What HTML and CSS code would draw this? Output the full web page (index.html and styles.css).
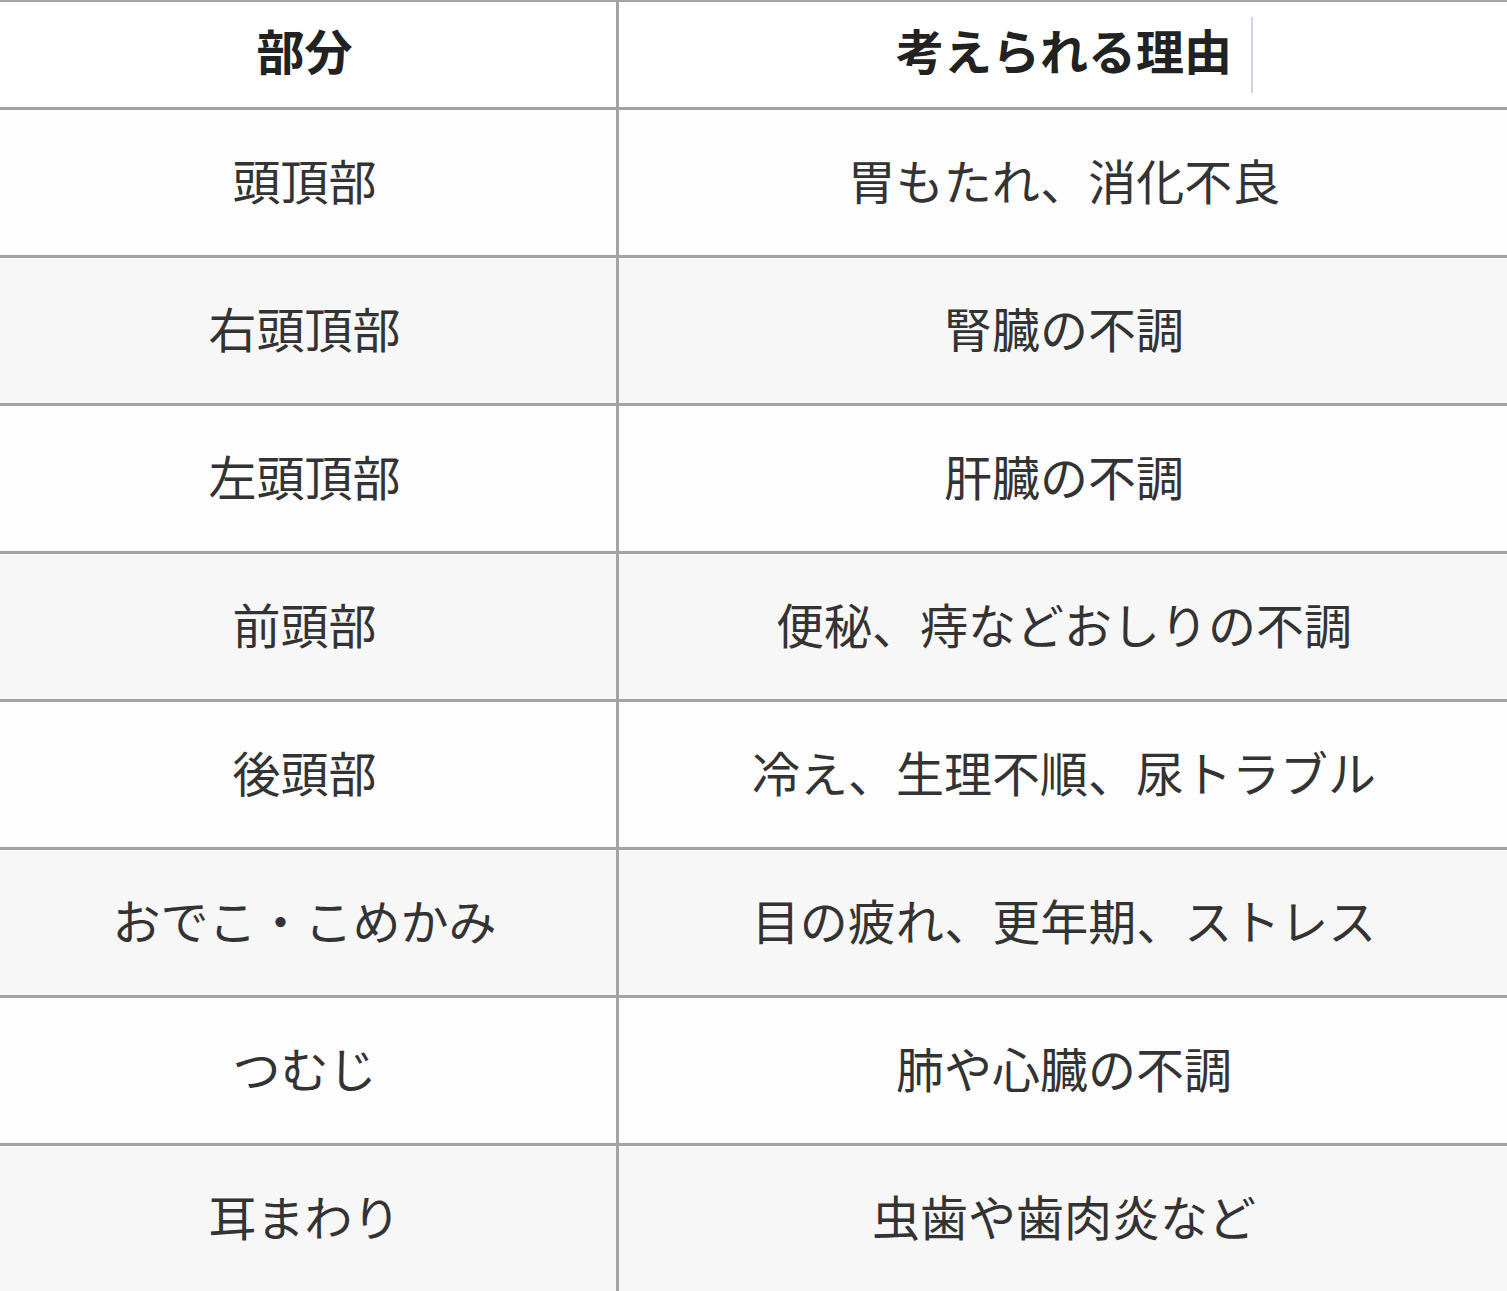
FILE: index.html
```html
<!DOCTYPE html>
<html lang="ja">
<head>
<meta charset="utf-8">
<title>部分と考えられる理由</title>
<link rel="stylesheet" href="styles.css">
</head>
<body>
<table class="reason-table">
  <thead>
    <tr>
      <th class="col-part">部分</th>
      <th class="col-reason"><span class="head-text">考えられる理由<span class="caret"></span></span></th>
    </tr>
  </thead>
  <tbody>
    <tr><td>頭頂部</td><td>胃もたれ、消化不良</td></tr>
    <tr><td>右頭頂部</td><td>腎臓の不調</td></tr>
    <tr><td>左頭頂部</td><td>肝臓の不調</td></tr>
    <tr><td>前頭部</td><td>便秘、痔などおしりの不調</td></tr>
    <tr><td>後頭部</td><td>冷え、生理不順、尿トラブル</td></tr>
    <tr><td>おでこ・こめかみ</td><td>目の疲れ、更年期、ストレス</td></tr>
    <tr><td>つむじ</td><td>肺や心臓の不調</td></tr>
    <tr><td>耳まわり</td><td>虫歯や歯肉炎など</td></tr>
  </tbody>
</table>
</body>
</html>
```
FILE: styles.css
```css
html, body {
  margin: 0;
  padding: 0;
  background: #ffffff;
}
body {
  overflow: hidden;
  font-family: "Noto Sans CJK JP", "Noto Sans", sans-serif;
}
.reason-table {
  border-collapse: collapse;
  margin: -1px 0 0 -10px;
  width: 1522px;
  table-layout: fixed;
  font-size: 48px;
  color: #333333;
}
.reason-table th,
.reason-table td {
  border: 3px solid #a3a3a3;
  text-align: center;
  vertical-align: middle;
  line-height: 56px;
  white-space: nowrap;
}
.col-part {
  width: 623px;
}
.reason-table th {
  padding: 19px 0 30px;
  font-weight: 700;
  color: #222222;
  background: #ffffff;
}
.reason-table td {
  padding: 41px 0 48px;
  font-weight: 400;
}
.reason-table tbody tr:nth-child(odd) td {
  background: #fdfdfd;
}
.reason-table tbody tr:nth-child(even) td {
  background: #f7f7f7;
}
.head-text {
  position: relative;
  display: inline-block;
}
.caret {
  position: absolute;
  left: calc(100% + 19px);
  top: -4px;
  width: 2px;
  height: 76px;
  background: #c9d5ea;
}
```
